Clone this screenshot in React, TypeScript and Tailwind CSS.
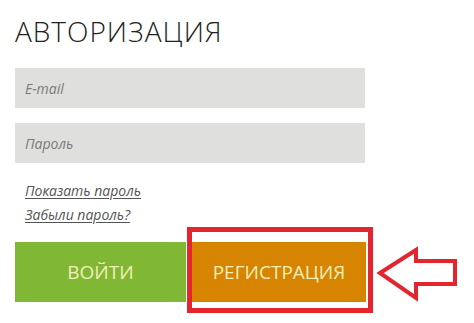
import React from "react";

export default function App() {
  return (
    <div className="w-[474px] h-[323px] bg-white overflow-hidden pl-[15px]" style={{ fontFamily: '"Open Sans", sans-serif' }}>
      <h1 className="mt-[17px] text-[28px] leading-[28px] font-light text-[#222] tracking-[1px]">АВТОРИЗАЦИЯ</h1>
      <div className="mt-[23px] w-[350px] flex flex-col gap-[15px]">
        <div className="h-[40px] bg-[#dfdfdd] flex items-center pl-[10px] text-[14px] italic text-[#7a7a7a]">E-mail</div>
        <div className="h-[40px] bg-[#dfdfdd] flex items-center pl-[10px] text-[14px] italic text-[#7a7a7a]">Пароль</div>
      </div>
      <div className="mt-[16px] pl-[10px] flex flex-col text-[14px] leading-[24px] italic text-[#555]">
        <span className="underline underline-offset-2">Показать пароль</span>
        <span className="underline underline-offset-2">Забыли пароль?</span>
      </div>
      <div className="mt-[15px] flex items-start">
        <div className="w-[171px] h-[60px] bg-[#80b735] flex items-center justify-center text-[19px] text-[#f3efb8]">ВОЙТИ</div>
        <div className="relative ml-[6px]">
          <div className="w-[174px] h-[60px] bg-[#d78400] flex items-center justify-center text-[19px] text-[#f3efb8]">РЕГИСТРАЦИЯ</div>
          <div className="absolute left-[-5px] top-[-15px] right-[-7px] bottom-[-11px] border-[5px] border-[#e3252d]"></div>
          <svg className="absolute left-[183px] top-[3px]" width="90" height="62" viewBox="0 0 90 62">
            <polygon points="5,28 41,5 41,16 80,16 80,39 41,39 41,53" fill="none" stroke="#e3252d" strokeWidth="4" strokeLinejoin="miter" />
          </svg>
        </div>
      </div>
    </div>
  );
}
